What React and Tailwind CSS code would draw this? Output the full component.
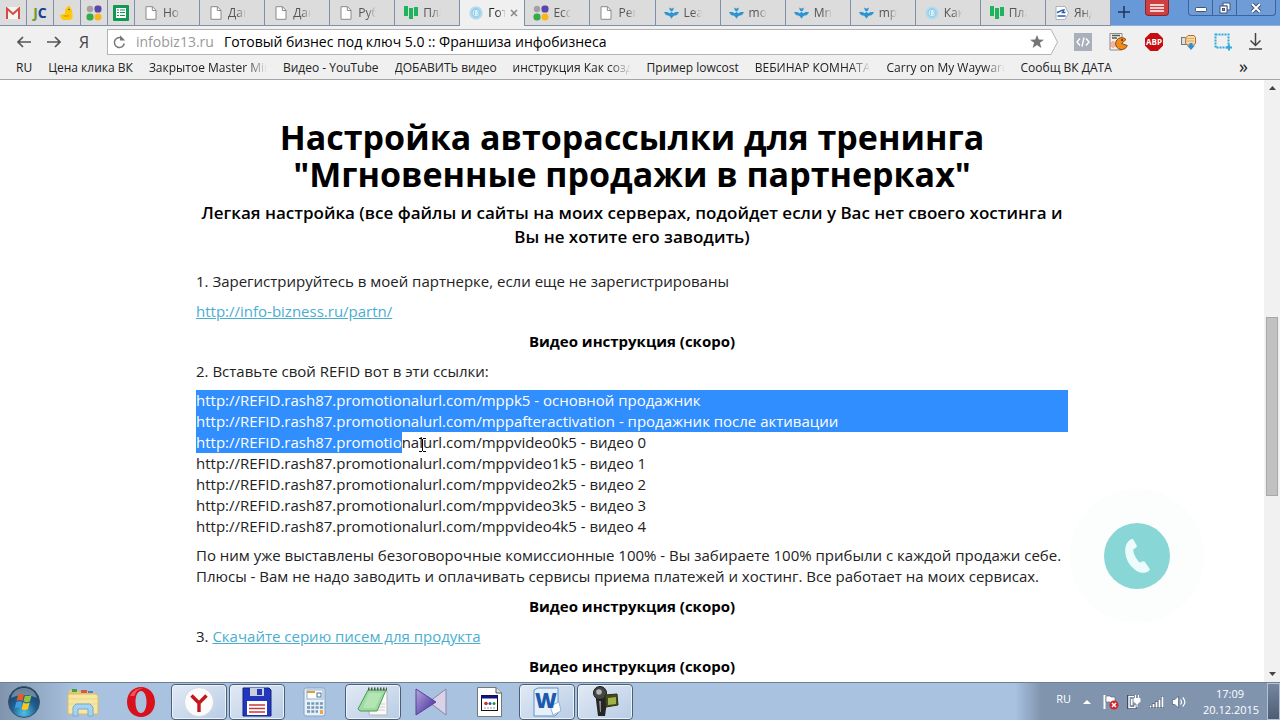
import { useState } from 'react';

const pinned = [
  { id: 'gmail', title: 'Gmail', Icon: GmailIcon },
  { id: 'jc', title: 'JustClick', Icon: JcIcon },
  { id: 'duck', title: 'Duck', Icon: DuckIcon },
  { id: 'dots', title: 'Ecc', Icon: DotsIcon },
  { id: 'sheets', title: 'Таблицы', Icon: SheetsIcon },
];

const tabs = [
  { id: 1, label: 'Но', Icon: PageIcon },
  { id: 2, label: 'Дан', Icon: PageIcon },
  { id: 3, label: 'Дан', Icon: PageIcon },
  { id: 4, label: 'Руб', Icon: PageIcon },
  { id: 5, label: 'Пла', Icon: BarsIcon },
  { id: 6, label: 'Гот', Icon: GlobeIcon },
  { id: 7, label: 'Ecc', Icon: DotsIcon },
  { id: 8, label: 'Рег', Icon: PageIcon },
  { id: 9, label: 'Lea', Icon: BirdIcon },
  { id: 10, label: 'mo', Icon: BirdIcon },
  { id: 11, label: 'Mn', Icon: BirdIcon },
  { id: 12, label: 'mp', Icon: BirdIcon },
  { id: 13, label: 'Как', Icon: GlobeIcon },
  { id: 14, label: 'Пла', Icon: BarsIcon },
  { id: 15, label: 'Янд', Icon: DirectIcon },
];

const bookmarks = [
  'RU',
  'Цена клика ВК',
  'Закрытое Master Mind',
  'Видео - YouTube',
  'ДОБАВИТЬ видео',
  'инструкция Как создать',
  'Пример lowcost',
  'ВЕБИНАР КОМНАТА',
  'Carry on My Wayward',
  'Сообщ ВК ДАТА',
];

const apps = [
  { id: 'explorer', title: 'Проводник', Icon: FolderIcon },
  { id: 'opera', title: 'Opera', Icon: OperaIcon },
  { id: 'yandex', title: 'Yandex', Icon: YandexIcon, open: true },
  { id: 'commander', title: 'Total Commander', Icon: FloppyIcon, open: true },
  { id: 'calc', title: 'Калькулятор', Icon: CalcIcon },
  { id: 'notepad', title: 'Блокнот', Icon: NotepadIcon, open: true },
  { id: 'player', title: 'KMPlayer', Icon: PlayerIcon },
  { id: 'denwer', title: 'Файл', Icon: FileIcon },
  { id: 'word', title: 'Word', Icon: WordIcon, open: true },
  { id: 'camera', title: 'Камера', Icon: CameraIcon, open: true },
];

/* ---------- favicons ---------- */

function GmailIcon() {
  return (
    <svg width="14" height="12" viewBox="0 0 14 12">
      <rect width="14" height="12" rx="1" fill="#f4f4f4" />
      <path d="M1 12V1.5L7 7l6-5.5V12" fill="none" stroke="#d54b3d" strokeWidth="2" />
    </svg>
  );
}

function JcIcon() {
  return (
    <span className="text-sm leading-4 font-bold text-[#17408f]">
      <span className="text-[#6d9a2c]">J</span>C
    </span>
  );
}

function DuckIcon() {
  return (
    <svg width="14" height="15" viewBox="0 0 14 15">
      <path d="M5 5 8 1l2 0 1 3 1.500 2-1 2 1 1v4l-2 2H3l-2-2-1-3 5-1z" fill="#fdc808" />
      <path d="M3 10h6v2H4z" fill="#eda900" />
      <circle cx="9" cy="4.500" r=".8" fill="#6b4c00" />
    </svg>
  );
}

function DotsIcon() {
  return (
    <svg width="16" height="16" viewBox="0 0 16 16" className="shrink-0">
      <circle cx="4" cy="4" r="3.200" fill="#a7a0a3" />
      <rect x="8.500" y=".5" width="7" height="7" rx="2.800" fill="#5b47ab" />
      <rect x=".5" y="8.500" width="7" height="7" rx="3" fill="#35ab4a" />
      <circle cx="12" cy="12" r="3.500" fill="#f9b715" />
    </svg>
  );
}

function SheetsIcon() {
  return (
    <svg width="16" height="16" viewBox="0 0 16 16">
      <rect width="16" height="16" rx="1" fill="#129855" />
      <rect x="3" y="3" width="10" height="10" fill="#fff" />
      <path d="M4 5h2M7 5h5M4 7.500h2M7 7.500h5M4 10.500h2M7 10.500h5" stroke="#129855" strokeWidth="1.200" />
    </svg>
  );
}

function PageIcon() {
  return (
    <svg width="12" height="14" viewBox="0 0 12 14" className="shrink-0">
      <path d="M1 .7h6.500L11 4.300v9H1z" fill="#fff" stroke="#8a8a8a" />
      <path d="M7.300.7v3.800H11" fill="none" stroke="#8a8a8a" />
    </svg>
  );
}

function BarsIcon() {
  return (
    <svg width="14" height="13" viewBox="0 0 14 13" className="shrink-0">
      <path d="M0 0h4v10H0zM5 2h4v11H5zM10 1h4v9h-4z" fill="#1fb35e" />
    </svg>
  );
}

function GlobeIcon() {
  return (
    <svg width="14" height="14" viewBox="0 0 14 14" className="shrink-0">
      <circle cx="7" cy="7" r="6.700" fill="#b5dcee" />
      <circle cx="7" cy="7" r="4" fill="#d9eef7" stroke="#8dcbe6" strokeWidth="1.300" />
      <path d="M5.500 4.500v5M8 5c2 .5 2 3.500 0 4" fill="none" stroke="#8dcbe6" />
    </svg>
  );
}

function BirdIcon() {
  return (
    <svg width="15" height="12" viewBox="0 0 15 12" className="shrink-0">
      <path d="M0 5c2.500-.3 4.500 0 5.500 1.200L7.500 5l2 1.200C10.500 5 12.500 4.700 15 5c-.8 2-2 3.300-4 3.500-1.500.2-2.500 1.500-3.500 3.300C6.500 10 5.500 8.700 4 8.500 2 8.300.8 7 0 5z" fill="#2b95d3" />
      <path d="M5 .5 7 1.500h1l2-1-1 3-1.500 1L6 3.500z" fill="#2b95d3" />
    </svg>
  );
}

function DirectIcon() {
  return (
    <svg width="14" height="14" viewBox="0 0 14 14" className="shrink-0">
      <path d="M1 .5h9L13.500 7 10 13.500H1z" fill="#fff" stroke="#a9b2bd" />
      <path d="M2 6.500C5 6 6 4 9 4L7.500 6.500h3M2.500 10h8" fill="none" stroke="#2a5caa" strokeWidth="1.400" />
    </svg>
  );
}

/* ---------- toolbar icons ---------- */

function Arrow({ back }) {
  return (
    <svg width="14" height="12" viewBox="0 0 14 12">
      <path d={back ? 'M14 6H1.500M6 1 1 6l5 5' : 'M0 6h12.500M8 1l5 5-5 5'} fill="none" stroke="#555" strokeWidth="1.700" />
    </svg>
  );
}

function ReloadIcon() {
  return (
    <svg width="13" height="14" viewBox="0 0 13 14" className="shrink-0">
      <path d="M9 3.200A5 5 0 1 0 11.300 8.500" fill="none" stroke="#777" strokeWidth="1.500" />
      <path d="M7 .3v5.200h5.200z" fill="#777" />
    </svg>
  );
}

function CodeIcon() {
  return (
    <svg width="18" height="18" viewBox="0 0 18 18">
      <rect width="18" height="18" fill="#a9afbb" />
      <path d="M6 5.500 3 9l3 3.500M12 5.500 15 9l-3 3.500M10 4.500l-2 9" fill="none" stroke="#fff" strokeWidth="1.400" />
    </svg>
  );
}

function PacmanIcon() {
  return (
    <svg width="19" height="18" viewBox="0 0 19 18">
      <path d="M1 .5h12V17H1z" fill="#f4f0ea" stroke="#8b8b8b" />
      <path d="M3 2.500h8M3 5h5" stroke="#555" strokeWidth="1.500" />
      <path d="M2 9v5M4 8v7M6 9v5" stroke="#ef8d68" strokeWidth="1.200" />
      <path d="M12.500 10.500 17 6.500a6 6 0 1 0 1.300 6z" fill="#f08c1c" stroke="#8b4a10" />
      <circle cx="13" cy="7" r=".9" fill="#46260a" />
    </svg>
  );
}

function AbpIcon() {
  return (
    <svg width="18" height="18" viewBox="0 0 18 18">
      <path d="M5.300 0h7.400L18 5.300v7.400L12.700 18H5.300L0 12.700V5.300z" fill="#c70d12" />
      <text x="9" y="12" textAnchor="middle" fontSize="8" fontWeight="700" fill="#fff" fontFamily="Open Sans, sans-serif">ABP</text>
    </svg>
  );
}

function GrabIcon() {
  return (
    <svg width="16" height="16" viewBox="0 0 16 16">
      <rect x=".5" y="3.500" width="6" height="7" fill="#ddd" stroke="#777" />
      <path d="M5 3.500 7 1.500h6l1.500 2v6l-2 1.500H6L4.500 9z" fill="#f9d6a4" stroke="#a87332" />
      <path d="M6 4.500h7M6 7h7" stroke="#dba968" />
      <path d="M8.500 9h3v2.500h2.500L10 16l-4-4.500h2.500z" fill="#2f8fd0" />
    </svg>
  );
}

function SelectionIcon() {
  return (
    <svg width="18" height="18" viewBox="0 0 18 18">
      <rect x="1.500" y="1.500" width="13" height="13" fill="none" stroke="#2eaadc" strokeWidth="2" strokeDasharray="2 1" />
      <path d="M15 11.500v6M12 14.500h6" stroke="#2eaadc" strokeWidth="2" />
    </svg>
  );
}

function DownloadIcon() {
  return (
    <svg width="13" height="17" viewBox="0 0 13 17">
      <path d="M6.500 0v12M1.500 7.500l5 5 5-5M0 16h13" fill="none" stroke="#444" strokeWidth="1.500" />
    </svg>
  );
}

const extensions = [
  { id: 'code', title: 'Код', Icon: CodeIcon },
  { id: 'pacman', title: 'Скрипты', Icon: PacmanIcon },
  { id: 'abp', title: 'Adblock Plus', Icon: AbpIcon },
  { id: 'grab', title: 'Скачать', Icon: GrabIcon },
  { id: 'selection', title: 'Скриншот', Icon: SelectionIcon },
  { id: 'downloads', title: 'Загрузки', Icon: DownloadIcon },
];

/* ---------- taskbar icons ---------- */

function StartIcon() {
  return (
    <svg width="32" height="32" viewBox="0 0 32 32">
      <defs>
        <radialGradient id="orb" cx="50%" cy="85%" r="80%">
          <stop offset="0" stopColor="#4fc3e8" />
          <stop offset=".5" stopColor="#1f5f92" />
          <stop offset="1" stopColor="#1d3b5c" />
        </radialGradient>
      </defs>
      <circle cx="16" cy="16" r="15.500" fill="url(#orb)" stroke="#3a536f" />
      <path d="M3 12C5 4 11 2 16 2s11 2 13 10c-8-4-18-4-26 0z" fill="#fff" opacity=".35" />
      <path d="M10 9c2-1.500 4-1.500 6-.3L14.500 15c-2-1.200-4-1.200-6 0z" fill="#ea5a24" />
      <path d="M17 9.200c2 1.200 4.500 1.200 6.500 0L22 15.300c-2 1.200-4.500 1.200-6.500 0z" fill="#8fc641" />
      <path d="M8.200 16.200c2-1.300 4-1.200 6 0L12.700 22.500c-2-1.200-4-1.200-6 0z" fill="#3da0dc" />
      <path d="M15.200 16.600c2 1.200 4.500 1.200 6.500 0L20 23c-2 1.200-4.500 1.200-6.500 0z" fill="#fbc423" />
    </svg>
  );
}

function FolderIcon() {
  return (
    <svg width="32" height="30" viewBox="0 0 32 30">
      <path d="M2 3h9l2 2h15v20H2z" fill="#e3c877" />
      <path d="M5 2h5v3H5z" fill="#43a047" />
      <path d="M14 3h6v3h-6z" fill="#d9573f" />
      <path d="M21 4h5v2h-5z" fill="#4384d6" />
      <path d="M1 7h28l2 2v18H1z" fill="#f6e7a4" stroke="#d9bc63" />
      <path d="M2 12h28M2 17h28" stroke="#ecd584" />
      <path d="M6 29V20l3-3h14l3 3v9h-5v-7H11v7z" fill="#a6d3ef" stroke="#74abd1" />
    </svg>
  );
}

function OperaIcon() {
  return (
    <svg width="28" height="30" viewBox="0 0 28 30">
      <path fillRule="evenodd" d="M14 0C6 0 0 6.500 0 15s6 15 14 15 14-6.500 14-15S22 0 14 0zm0 4c3.500 0 5.500 5 5.500 11S17.500 26 14 26s-5.500-5-5.500-11S10.500 4 14 4z" fill="#d8121c" />
      <path d="M3 9C6 3 11 .8 16 1.200 11 2 8.500 4.500 7.500 9z" fill="#ee5a5e" />
    </svg>
  );
}

function YandexIcon() {
  return (
    <svg width="30" height="30" viewBox="0 0 30 30">
      <circle cx="15" cy="15" r="14.500" fill="#fbfbfb" stroke="#d5dae2" />
      <path d="M7.500 8.500 15 16l7.500-7.500M15 15.500V25" fill="none" stroke="#c4151c" strokeWidth="3.400" />
    </svg>
  );
}

function FloppyIcon() {
  return (
    <svg width="30" height="30" viewBox="0 0 30 30">
      <path d="M1 1h26l2 2v26H1z" fill="#2337bd" stroke="#15237f" />
      <path d="M8 1h14v8H8z" fill="#c9cfdc" />
      <path d="M15 2h5v6h-5z" fill="#2337bd" />
      <path d="M5 14h20v14H5z" fill="#fff" />
      <path d="M7 18h16M7 21.500h16M7 25h16" stroke="#c23b42" strokeWidth="1.300" />
    </svg>
  );
}

function CalcIcon() {
  return (
    <svg width="24" height="30" viewBox="0 0 24 30">
      <rect x="1" y="1" width="21" height="28" rx="2" fill="#e9f1f8" stroke="#83a4c2" />
      <rect x="4" y="3" width="16" height="9" fill="#fdfdfd" stroke="#8fb1cf" />
      <path d="M4 5h8" stroke="#e39a3c" strokeWidth="2" />
      <rect x="14" y="6" width="4" height="4" fill="none" stroke="#486f97" />
      <path d="M4 16.500h16M4 20.500h16M4 24.500h11" stroke="#7597b8" strokeWidth="2.500" strokeDasharray="3 1.300" />
      <path d="M17 23h3v4h-3z" fill="#eda64b" />
    </svg>
  );
}

function NotepadIcon() {
  return (
    <svg width="32" height="30" viewBox="0 0 32 30">
      <path d="M14 4h16v24H12z" fill="#fafafa" stroke="#b5b5b5" />
      <path d="M22 17h6M21 20h7M20 23h8" stroke="#ccc" />
      <path d="M11 3h18L20 24H3l-2-2z" fill="#9edb9f" stroke="#4b9a56" />
      <path d="M12 6h13l-7 15H6z" fill="#bfeabf" opacity=".7" />
      <path d="M11 2h19" stroke="#4c5b4c" strokeWidth="3" strokeDasharray="1.500 1.500" />
    </svg>
  );
}

function PlayerIcon() {
  return (
    <svg width="32" height="28" viewBox="0 0 32 28">
      <defs>
        <linearGradient id="kmp" x1="0" y1="0" x2="1" y2="1">
          <stop offset="0" stopColor="#b5a8dd" />
          <stop offset="1" stopColor="#3d2393" />
        </linearGradient>
      </defs>
      <path d="M31 1v26L14 14z" fill="#d9d3e8" stroke="#8c83a8" />
      <path d="M1 1l20 13L1 27z" fill="url(#kmp)" stroke="#56429b" />
    </svg>
  );
}

function FileIcon() {
  return (
    <svg width="25" height="30" viewBox="0 0 25 30">
      <path d="M.5.5H19l5.500 5.500v23.500H.5z" fill="#fff" stroke="#777" />
      <path d="M19 .5V6h5.500" fill="#ddd" stroke="#555" />
      <rect x="4.500" y="8.500" width="16" height="15" fill="#fff" stroke="#111" />
      <path d="M4 10h17" stroke="#11118a" strokeWidth="3" />
      <circle cx="9" cy="16.500" r="1.800" fill="#d02a2a" />
      <circle cx="13" cy="16.500" r="1.500" fill="#2451c6" />
      <circle cx="17" cy="16.500" r="1.500" fill="#23913a" />
      <path d="M7 21h11" stroke="#999" strokeDasharray="2 1" />
    </svg>
  );
}

function WordIcon() {
  return (
    <svg width="30" height="30" viewBox="0 0 30 30">
      <path d="M2 3 6 1h20v25l-3 3H2z" fill="#e6f0fa" stroke="#5d94cc" />
      <path d="M18 19l9-4 2 9-8 4z" fill="#fff" stroke="#8fb5dc" />
      <text x="14" y="21" textAnchor="middle" fontSize="21" fontWeight="800" fill="#1b5aad" fontFamily="Open Sans, sans-serif">W</text>
    </svg>
  );
}

function CameraIcon() {
  return (
    <svg width="28" height="32" viewBox="0 0 28 32">
      <path d="M5 8h9l2 8-2 14H7L5 14z" fill="#262626" />
      <circle cx="9" cy="7" r="6.500" fill="#454545" stroke="#1c1c1c" />
      <circle cx="8" cy="6" r="2.800" fill="#b5b5b5" />
      <path d="M8 15h2v11H9z" fill="#8a8a8a" />
      <path d="M14 9l12-1 1 11-12 2z" fill="#454a1d" stroke="#2e3110" />
      <path d="M17 12l8-1v7l-8 1z" fill="#a0b04a" />
    </svg>
  );
}

/* ---------- browser chrome ---------- */

function TabStrip({ active, onSelect }) {
  return (
    <div className="flex h-[26px] bg-[#6799d8]">
      <div role="tablist" className="flex min-w-0 flex-1 bg-[#dcdcdc]">
        {pinned.map(({ id, title, Icon }) => (
          <button
            key={id}
            role="tab"
            aria-label={title}
            className="flex w-[27px] shrink-0 items-center justify-center border-r border-b border-[#7f8fa8]"
          >
            <Icon />
          </button>
        ))}
        {tabs.map(({ id, label, Icon }) => (
          <button
            key={id}
            role="tab"
            aria-selected={id === active}
            onClick={() => onSelect(id)}
            className={`flex min-w-0 flex-1 items-center gap-1 border-r pl-2 text-xs ${
              id === active ? 'border-[#7f8fa8] bg-[#f0f0f0] text-[#222]' : 'border-b border-[#7f8fa8] text-[#555]'
            }`}
          >
            <span className="flex w-4 shrink-0 justify-center">
              <Icon />
            </span>
            <span className="w-[18px] shrink-0 overflow-hidden text-left whitespace-nowrap [mask-image:linear-gradient(to_right,black_50%,transparent)]">
              {label}
            </span>
            {id === active && (
              <svg width="8" height="8" viewBox="0 0 8 8" className="shrink-0">
                <path d="M1 1l6 6M7 1 1 7" stroke="#888" strokeWidth="1.500" />
              </svg>
            )}
          </button>
        ))}
      </div>
      <div className="flex w-[169px] shrink-0 items-start justify-between border-b border-[#8fb0dd] pr-1 pl-[7px]">
        <button aria-label="Новая вкладка" className="pt-1.5">
          <svg width="12" height="12" viewBox="0 0 12 12">
            <path d="M6 0v12M0 6h12" stroke="#1f3553" strokeWidth="1.500" />
          </svg>
        </button>
        <div className="flex gap-[19px]">
          <button aria-label="Меню" className="flex h-4 w-6 items-center justify-center rounded-b-sm border border-t-0 border-[#8e2226] bg-[#cf3f42]">
            <svg width="14" height="8" viewBox="0 0 14 8">
              <path d="M0 1h14M0 4h14M0 7h14" stroke="#fff" strokeWidth="1.300" />
            </svg>
          </button>
          <div className="flex h-4 divide-x divide-[#3c639c] rounded-b-sm border border-t-0 border-[#3c639c] bg-[#6f9cd6]">
            <button aria-label="Свернуть" className="flex w-6 items-end justify-center pb-[3px]">
              <svg width="12" height="5" viewBox="0 0 12 5">
                <rect x=".5" y=".5" width="11" height="4" rx="1" fill="#fff" stroke="#3d5579" />
              </svg>
            </button>
            <button aria-label="Развернуть" className="flex w-6 items-center justify-center">
              <svg width="12" height="12" viewBox="0 0 12 12">
                <path d="M4 1h7v7H8V4H4z" fill="#fff" stroke="#3d5579" />
                <rect x="1" y="4" width="7" height="7" fill="#fff" stroke="#3d5579" />
                <rect x="3.500" y="6.500" width="2" height="2" fill="#6f9cd6" stroke="#3d5579" />
              </svg>
            </button>
            <button aria-label="Закрыть" className="flex w-[38px] items-center justify-center">
              <svg width="12" height="10" viewBox="0 0 12 10">
                <path d="M2 1l8 8M10 1 2 9" stroke="#3d5579" strokeWidth="4" />
                <path d="M2 1l8 8M10 1 2 9" stroke="#fff" strokeWidth="2" />
              </svg>
            </button>
          </div>
        </div>
      </div>
    </div>
  );
}

function Toolbar() {
  return (
    <div className="flex h-[31px] items-center bg-[#f0f0f0] pr-[18px] pl-[17px]">
      <div className="flex w-[90px] shrink-0 items-center gap-4">
        <button aria-label="Назад"><Arrow back /></button>
        <button aria-label="Вперёд"><Arrow /></button>
        <button className="px-0.5 text-base leading-5 text-[#444]">Я</button>
      </div>
      <div className="flex h-[26px] min-w-0 flex-1">
        <div className="flex min-w-0 flex-1 items-center border border-r-0 border-[#b4b4b4] bg-white pl-[5px] text-sm">
          <button aria-label="Обновить"><ReloadIcon /></button>
          <label htmlFor="address" className="ml-[10px] text-[#999]">infobiz13.ru</label>
          <input
            id="address"
            type="text"
            defaultValue="Готовый бизнес под ключ 5.0 :: Франшиза инфобизнеса"
            className="ml-[10px] min-w-0 flex-1 bg-transparent text-black outline-none"
          />
          <button aria-label="В избранное">
            <svg width="14" height="13" viewBox="0 0 14 13">
              <path d="M7 0l1.800 4.600 5.200.2-4.100 3 1.500 5.200L7 10l-4.400 3 1.500-5.200L0 4.800l5.200-.2z" fill="#757575" />
            </svg>
          </button>
        </div>
        <svg width="14" height="26" viewBox="0 0 14 26" className="shrink-0">
          <path d="M0 .5h7L13.500 13 7 25.500H0" fill="#fff" stroke="#b4b4b4" />
        </svg>
      </div>
      <div className="ml-4 flex w-[188px] shrink-0 items-center justify-between">
        {extensions.map(({ id, title, Icon }) => (
          <button key={id} aria-label={title}><Icon /></button>
        ))}
      </div>
    </div>
  );
}

function Bookmarks() {
  return (
    <nav className="flex h-[23px] items-center gap-4 border-b border-[#a5a5a5] bg-[#f0f0f0] pr-[32px] pl-4 text-xs text-[#222]">
      {bookmarks.map((name) => (
        <a
          key={name}
          href="#"
          className={`max-w-[118px] overflow-hidden whitespace-nowrap ${
            name.length > 15 || name.startsWith('ВЕБ') ? '[mask-image:linear-gradient(to_right,black_82%,transparent)]' : ''
          }`}
        >
          {name}
        </a>
      ))}
      <button aria-label="Ещё" className="ml-auto pb-1 text-lg leading-4">»</button>
    </nav>
  );
}

function Scrollbar() {
  return (
    <div className="flex w-4 shrink-0 flex-col items-center bg-[#f1f1f1]">
      <button aria-label="Вверх" className="flex h-4 w-4 items-center justify-center">
        <svg width="7" height="4" viewBox="0 0 7 4"><path d="M3.500 0 7 4H0z" fill="#444" /></svg>
      </button>
      <div className="flex-1">
        <div className="mt-[221px] h-[179px] w-3 border border-[#a8a8a8] bg-[#c1c1c1]" />
      </div>
      <button aria-label="Вниз" className="flex h-4 w-4 items-center justify-center">
        <svg width="7" height="4" viewBox="0 0 7 4"><path d="M3.500 4 7 0H0z" fill="#444" /></svg>
      </button>
    </div>
  );
}

/* ---------- page ---------- */

function VideoNote() {
  return <p className="mb-[9px] text-center font-bold text-black">Видео инструкция (скоро)</p>;
}

function Article() {
  return (
    <article className="mx-auto w-[872px] max-w-full pt-[39px] text-[15px] leading-[21px] text-[#222]">
      <h1 className="text-center text-[34px] leading-[37px] font-bold text-black">
        Настройка авторассылки для тренинга
        <br />
        "Мгновенные продажи в партнерках"
      </h1>
      <h3 className="mt-2 mb-[22px] text-center text-[17px] leading-6 font-semibold text-black">
        Легкая настройка (все файлы и сайты на моих серверах, подойдет если у Вас нет своего хостинга и
        Вы не хотите его заводить)
      </h3>
      <p className="mb-[9px]">1. Зарегистрируйтесь в моей партнерке, если еще не зарегистрированы</p>
      <p className="mb-[9px]">
        <a href="#" className="text-[#4aaed0] underline">http://info-bizness.ru/partn/</a>
      </p>
      <VideoNote />
      <p className="mb-2">2. Вставьте свой REFID вот в эти ссылки:</p>
      <div className="mb-2">
        <p className="bg-[#308efe] text-white">http://REFID.rash87.promotionalurl.com/mppk5 - основной продажник</p>
        <p className="bg-[#308efe] text-white">
          http://REFID.rash87.promotionalurl.com/mppafteractivation - продажник после активации
        </p>
        <p>
          <span className="inline-block bg-[#308efe] text-white">http://REFID.rash87.promotio</span>
          na
          <span className="relative">
            l
            <svg width="7" height="14" viewBox="0 0 7 14" className="absolute top-1.5 left-0">
              <path d="M0 .5h3M4 .5h3M3.500 1v12M0 13.500h3M4 13.500h3" stroke="#000" />
            </svg>
          </span>
          url.com/mppvideo0k5 - видео 0
        </p>
        {[1, 2, 3, 4].map((n) => (
          <p key={n}>{`http://REFID.rash87.promotionalurl.com/mppvideo${n}k5 - видео ${n}`}</p>
        ))}
      </div>
      <p className="mb-[9px]">
        По ним уже выставлены безоговорочные комиссионные 100% - Вы забираете 100% прибыли с каждой продажи себе.
        <br />
        Плюсы - Вам не надо заводить и оплачивать сервисы приема платежей и хостинг. Все работает на моих сервисах.
      </p>
      <VideoNote />
      <p className="mb-[9px]">
        3. <a href="#" className="text-[#4aaed0] underline">Скачайте серию писем для продукта</a>
      </p>
      <VideoNote />
    </article>
  );
}

function CallButton() {
  return (
    <div className="absolute right-[76px] bottom-[59px] flex h-[134px] w-[134px] items-center justify-center rounded-full bg-[#fcfdfd]">
      <button aria-label="Позвонить" className="flex h-[66px] w-[66px] items-center justify-center rounded-full bg-[#88d6d6]">
        <svg width="28" height="36" viewBox="0 0 28 36">
          <path d="M8 1.200c1.200-.6 2-.3 2.600.7l3 5.300c.5 1 .3 1.700-.5 2.300L10.300 11.400c-.5 2.500 2.500 9.800 6.200 13l3.200-1c1-.4 1.700-.2 2.200.6l4.500 6.500c.6 1 .4 1.800-.5 2.400-5 3.400-11.500 2.700-17.400-4.400C1 20.500-.5 6 8 1.200z" fill="#edfbfc" />
        </svg>
      </button>
    </div>
  );
}

/* ---------- taskbar ---------- */

function Tray() {
  return (
    <div className="flex h-full items-stretch bg-linear-to-r from-transparent to-[#8094ae] to-10% pl-[41px] text-[11px] text-white">
      <div className="flex items-center gap-2 pr-[17px]">
        <span className="pr-1 pb-1">RU</span>
        <button aria-label="Скрытые значки" className="pr-1">
          <svg width="8" height="4" viewBox="0 0 8 4"><path d="M4 0l4 4H0z" fill="#fff" /></svg>
        </button>
        <svg width="16" height="16" viewBox="0 0 16 16">
          <path d="M1.500 1v14" stroke="#fff" strokeWidth="2" />
          <path d="M3 2h4l1 1h4v6H8L7 8H3z" fill="#fff" stroke="#4f5e74" strokeWidth=".6" />
          <circle cx="11" cy="11" r="4.500" fill="#d3262c" />
          <path d="M9 9l4 4M13 9l-4 4" stroke="#fff" strokeWidth="1.500" />
        </svg>
        <svg width="14" height="14" viewBox="0 0 14 14">
          <path d="M7 1H1.500v12H8v-3" fill="none" stroke="#3e4d63" strokeWidth="3" />
          <path d="M7 1.500H2v11h6V10" fill="none" stroke="#fff" strokeWidth="1.500" />
          <path d="M4 4h1.500v6H4z" fill="#fff" />
          <path d="M7 3.500h6v3l-2 2H9l-2-2zM10 8v4M8.500 0v4M11.500 0v4" fill="#fff" stroke="#fff" />
        </svg>
        <svg width="15" height="12" viewBox="0 0 15 12">
          <path d="M1.500 12V9M4.500 12V7.500M7.500 12V5.500M10.500 12V3M13.500 12V0" stroke="#3e4d63" strokeWidth="3" />
          <path d="M1.500 11.500V9.500M4.500 11.500V8M7.500 11.500V6M10.500 11.500V3.500M13.500 11.500V.5" stroke="#fff" strokeWidth="2" />
        </svg>
        <svg width="14" height="14" viewBox="0 0 14 14">
          <path d="M.5 4.500H3L6.500 1v12L3 9.500H.5z" fill="#fff" stroke="#3e4d63" strokeWidth=".6" />
          <path d="M8.500 4.500c1.200 1.500 1.200 3.500 0 5M10.800 2.500c2.500 2.700 2.500 6.300 0 9" fill="none" stroke="#fff" strokeWidth="1.200" />
        </svg>
      </div>
      <div className="flex w-[54px] flex-col justify-center text-center leading-4">
        <span>17:09</span>
        <span>20.12.2015</span>
      </div>
      <button aria-label="Показать рабочий стол" className="ml-[10px] w-[13px] border border-[#b4c2d4] bg-linear-to-b from-[#75879f] to-[#4d5d74]" />
    </div>
  );
}

function Taskbar() {
  return (
    <footer className="flex h-[38px] shrink-0 items-center justify-between border-t border-[#6f8096] bg-linear-to-r from-[#8094ad] via-[#a9c2e0] via-6% to-[#a9c2e0]">
      <div className="flex h-full items-center">
        <button aria-label="Пуск" className="flex w-[55px] items-center pl-2"><StartIcon /></button>
        <div className="flex gap-0.5">
          {apps.map(({ id, title, Icon, open }) => (
            <button
              key={id}
              aria-label={title}
              className={`flex h-9 w-14 items-center justify-center ${
                open ? 'rounded-sm border border-[#4c5f79] bg-linear-to-br from-[#e2eaf5] to-[#b8cce5] inset-ring inset-ring-[#edf3fa]' : ''
              }`}
            >
              <Icon />
            </button>
          ))}
        </div>
      </div>
      <Tray />
    </footer>
  );
}

export default function App() {
  const [active, setActive] = useState(6);

  return (
    <div className="flex h-screen flex-col overflow-hidden bg-white font-['Open_Sans','Noto_Sans',sans-serif]">
      <header className="shrink-0">
        <TabStrip active={active} onSelect={setActive} />
        <Toolbar />
        <Bookmarks />
      </header>
      <div className="relative flex min-h-0 flex-1">
        <main className="min-w-0 flex-1 overflow-hidden">
          <Article />
        </main>
        <Scrollbar />
        <CallButton />
      </div>
      <Taskbar />
    </div>
  );
}
